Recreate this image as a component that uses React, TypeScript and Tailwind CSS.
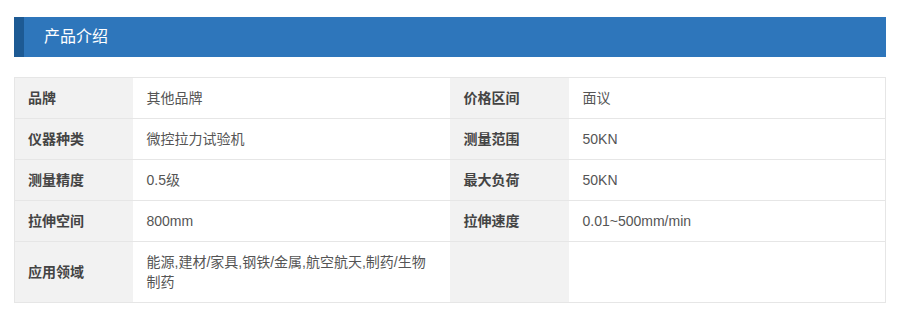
const rows: [string, string, string, string][] = [
  ["品牌", "其他品牌", "价格区间", "面议"],
  ["仪器种类", "微控拉力试验机", "测量范围", "50KN"],
  ["测量精度", "0.5级", "最大负荷", "50KN"],
  ["拉伸空间", "800mm", "拉伸速度", "0.01~500mm/min"],
  ["应用领域", "能源,建材/家具,钢铁/金属,航空航天,制药/生物制药", "", ""],
]

export default function App() {
  return (
    <div
      className="bg-white w-[900px] h-[309px] px-[14px] pt-[17px]"
      style={{ fontFamily: '"Liberation Sans", Arial, "Noto Sans CJK SC", sans-serif' }}
    >
      <div className="flex h-10 bg-[#2e76bb]">
        <div className="w-[10px] bg-[#1d5a94]" />
        <h2 className="pl-5 text-[16px] leading-10 text-white">产品介绍</h2>
      </div>

      <table className="mt-5 w-full table-fixed border-collapse border border-[#e6e6e6] text-[14px] leading-5">
        <colgroup>
          <col className="w-[118px]" />
          <col className="w-[317px]" />
          <col className="w-[119px]" />
          <col />
        </colgroup>
        <tbody>
          {rows.map((r) => (
            <tr key={r[0]} className="border-t border-[#e6e6e6]">
              <th className="bg-[#f2f2f2] pl-[13px] pr-[14px] py-[10px] text-left font-bold text-[#444]">{r[0]}</th>
              <td className="px-[14px] py-[10px] text-[#555]">{r[1]}</td>
              <th className="bg-[#f2f2f2] px-[14px] py-[10px] text-left font-bold text-[#444]">{r[2]}</th>
              <td className="px-[14px] py-[10px] text-[#555]">{r[3]}</td>
            </tr>
          ))}
        </tbody>
      </table>
    </div>
  )
}
